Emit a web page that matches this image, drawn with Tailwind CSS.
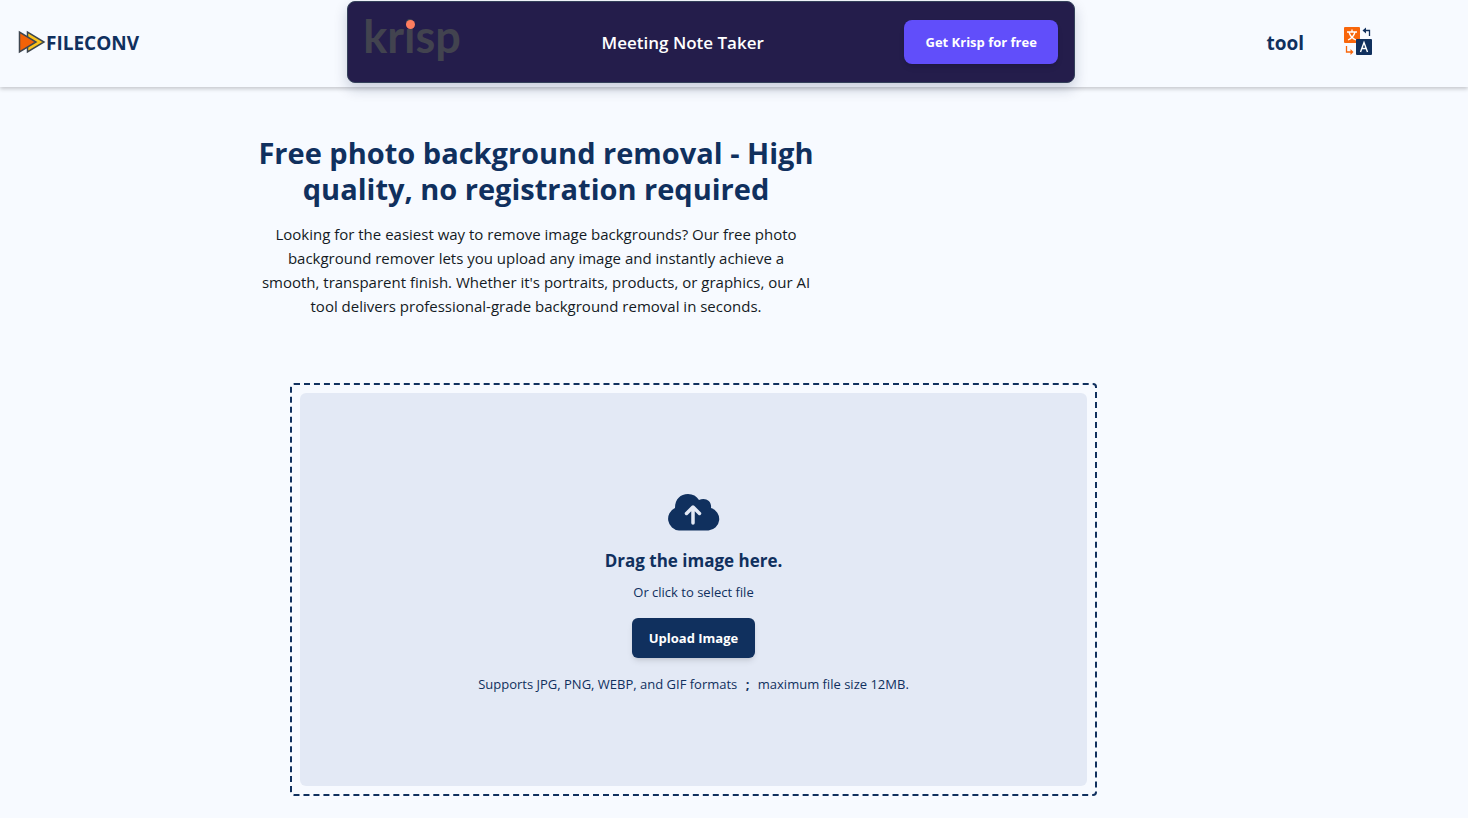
<!DOCTYPE html>
<html lang="en">
<head>
    <meta charset="UTF-8">
    <meta name="viewport" content="width=device-width, initial-scale=1.0">
    <title>FILECONV - Background Removal</title>
    <script src="https://cdn.jsdelivr.net/npm/@tailwindcss/browser@4"></script>
</head>
<body class="bg-[#f7faff] text-[#10305e] font-['Open_Sans','Noto_Sans',sans-serif] min-h-screen">
    <!-- Header -->
    <header class="flex items-start justify-between pl-[18px] pr-24 pt-px pb-1 shadow-[0_2px_4px_rgba(0,0,0,0.2)]">
        <a href="#" class="flex items-center w-[138px] h-[82px]">
            <svg class="w-7 h-6 shrink-0" viewBox="0 0 28 24" stroke="#3d4650" stroke-width="1.5">
                <path d="M9.500 2v20L26 12z" fill="#fbc31b"/>
                <path d="M1.500 2v20L18 12z" fill="#f26207"/>
            </svg>
            <span class="pt-0.5 text-[19px] font-bold">FILECONV</span>
        </a>

        <div class="flex items-center justify-between w-[728px] h-[82px] pl-[15px] pr-4 bg-[#241d4b] border border-[#34415a] rounded-lg shadow-[0_6px_14px_rgba(16,32,70,0.2)]">
            <div class="relative w-[98px] pb-3 font-[Lato,sans-serif] font-bold text-[45px] leading-[48px] text-[#42434f]">
                krisp
                <span class="absolute left-[43px] top-2 size-[9px] rounded-full bg-[#ff7d5f]"></span>
            </div>
            <p class="pt-0.5 text-[17px] font-semibold text-white">Meeting Note Taker</p>
            <button class="w-[154px] h-11 pt-0.5 rounded-lg bg-[#614efa] text-white text-[13px] font-bold shadow-md">Get Krisp for free</button>
        </div>

        <nav class="flex items-center gap-10 h-[82px]">
            <a href="#" class="pt-0.5 text-[19px] font-bold">tool</a>
            <button class="pb-0.5" aria-label="Language">
                <svg class="size-7" viewBox="0 0 28 28" fill="none">
                    <rect width="16" height="16" rx="1" fill="#f8660b"/>
                    <path d="M8 2.500v2M3 5h10M5 5c1 4 3.500 6.500 7 8M11 5c-1 4-3.500 6.500-7 8" stroke="#fff" stroke-width="1.300"/>
                    <rect x="12" y="12" width="16" height="16" rx="1" fill="#10305e"/>
                    <path d="M16.500 25L20 15.500 23.500 25M17.700 21.500h4.600" stroke="#fff" stroke-width="1.400"/>
                    <path d="M25.500 9V3.500H20" stroke="#10305e" stroke-width="1.300"/>
                    <path d="M22 .5v6L18.500 3.500z" fill="#10305e"/>
                    <path d="M2.500 19v6H7" stroke="#f8660b" stroke-width="1.300"/>
                    <path d="M6.500 22v6L9.500 25z" fill="#f8660b"/>
                </svg>
            </button>
        </nav>
    </header>

    <main class="mx-auto w-full max-w-[980px] pt-12">
        <!-- Intro -->
        <section class="w-full max-w-[584px] px-3 text-center">
            <h1 class="text-[29px] leading-9 font-bold">Free photo background removal - High quality, no registration required</h1>
            <p class="mt-[15px] px-1 text-[15px] leading-6 text-[#141a24]">Looking for the easiest way to remove image backgrounds? Our free photo background remover lets you upload any image and instantly achieve a smooth, transparent finish. Whether it's portraits, products, or graphics, our AI tool delivers professional-grade background removal in seconds.</p>
        </section>

        <!-- Drop zone -->
        <section class="mt-[65px] ml-[46px] w-full max-w-[807px] border-2 border-dashed border-[#10305e] rounded p-2">
            <div class="flex flex-col items-center rounded-md bg-[#e3e9f5] pt-[98px] pb-[92px]">
                <svg class="w-[54px] h-[42px]" viewBox="0 0 54 42">
                    <path d="M12 39.500A11.800 11.800 0 0 1 8 17C8 8 13.500 3 21 3c5 0 8.500 2 11 6C38 6 45 9.500 44 17A11.500 11.500 0 0 1 41.500 39.500z" fill="#10305e"/>
                    <path d="M26 32V17M19.500 22.500L26 16l6.500 6.500" fill="none" stroke="#e3e9f5" stroke-width="3.500" stroke-linecap="round" stroke-linejoin="round"/>
                </svg>
                <h2 class="mt-[14px] text-[17px] leading-7 font-bold">Drag the image here.</h2>
                <p class="mt-[7px] text-[13px] leading-5">Or click to select file</p>
                <button class="mt-4 h-10 w-[123px] pt-0.5 rounded-md bg-[#10305e] text-white text-[13px] font-bold shadow-md">Upload Image</button>
                <p class="mt-4 text-[13px] leading-5">Supports JPG, PNG, WEBP, and GIF formats <b class="mx-[5px]">;</b> maximum file size 12MB.</p>
            </div>
        </section>
    </main>
</body>
</html>
